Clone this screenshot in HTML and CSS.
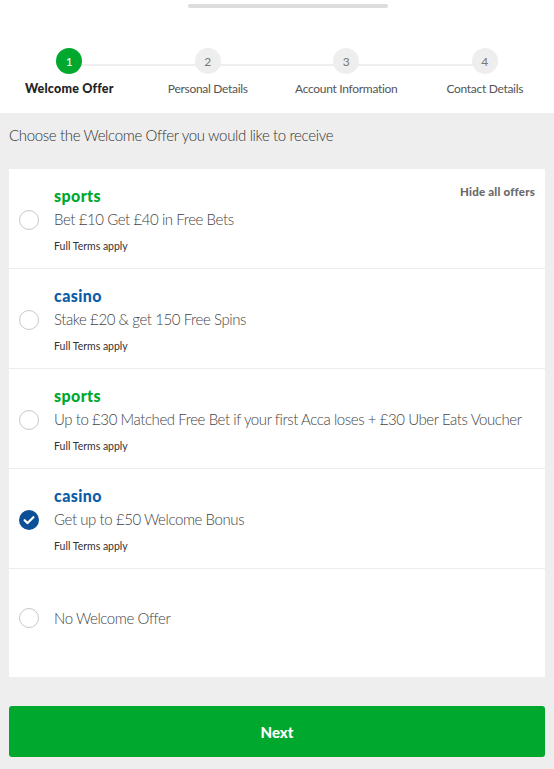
FILE: index.html
```html
<!DOCTYPE html>
<html lang="en">
<head>
<meta charset="utf-8">
<link rel="stylesheet" href="styles.css">
</head>
<body>
<div class="sheet">
  <div class="handle-wrap"><div class="handle"></div></div>
  <ol class="stepper">
    <li class="step active"><span class="dot">1</span><span class="label">Welcome Offer</span></li>
    <li class="step"><span class="dot">2</span><span class="label">Personal Details</span></li>
    <li class="step"><span class="dot">3</span><span class="label">Account Information</span></li>
    <li class="step"><span class="dot">4</span><span class="label">Contact Details</span></li>
  </ol>
  <main class="content">
    <p class="intro">Choose the Welcome Offer you would like to receive</p>
    <div class="offers">
      <label class="offer">
        <span class="radio"></span>
        <span class="body">
          <span class="cat sports">sports</span>
          <span class="title">Bet £10 Get £40 in Free Bets</span>
          <span class="terms">Full Terms apply</span>
        </span>
        <span class="hide">Hide all offers</span>
      </label>
      <label class="offer">
        <span class="radio"></span>
        <span class="body">
          <span class="cat casino">casino</span>
          <span class="title">Stake £20 &amp; get 150 Free Spins</span>
          <span class="terms">Full Terms apply</span>
        </span>
      </label>
      <label class="offer">
        <span class="radio"></span>
        <span class="body">
          <span class="cat sports">sports</span>
          <span class="title">Up to £30 Matched Free Bet if your first Acca loses + £30 Uber Eats Voucher</span>
          <span class="terms">Full Terms apply</span>
        </span>
      </label>
      <label class="offer">
        <span class="radio checked"><svg viewBox="0 0 20 20" width="20" height="20"><circle cx="10" cy="10" r="10" fill="#0b4f97"/><path d="M5.6 10.2 L8.6 13.1 L14.4 7.2" fill="none" stroke="#fff" stroke-width="2.2" stroke-linecap="round" stroke-linejoin="round"/></svg></span>
        <span class="body">
          <span class="cat casino">casino</span>
          <span class="title">Get up to £50 Welcome Bonus</span>
          <span class="terms">Full Terms apply</span>
        </span>
      </label>
      <label class="offer none">
        <span class="radio"></span>
        <span class="body">
          <span class="title">No Welcome Offer</span>
        </span>
      </label>
    </div>
    <button class="next" type="button">Next</button>
  </main>
</div>
</body>
</html>
```
FILE: styles.css
```css
* { box-sizing: border-box; }
html, body { margin: 0; padding: 0; }
body {
  font-family: Lato, "Noto Sans", sans-serif;
  background: #eeeeee;
  color: #444;
  width: 554px;
  height: 769px;
  overflow: hidden;
}
.sheet { display: flex; flex-direction: column; min-height: 769px; }
.handle-wrap { background: #fff; display: flex; justify-content: center; padding: 4px 0 0 22px; }
.handle { width: 200px; height: 4px; border-radius: 2px; background: #dcdcdc; }
.stepper {
  list-style: none;
  margin: 0;
  padding: 40px 0 17px;
  background: #fff;
  display: grid;
  grid-template-columns: repeat(4, 1fr);
  position: relative;
}
.stepper::before {
  content: "";
  position: absolute;
  left: 69px;
  right: 69px;
  top: 56px;
  height: 2px;
  background: #eeeeee;
}
.step { display: flex; flex-direction: column; align-items: center; position: relative; }
.dot {
  width: 26px; height: 26px; border-radius: 50%;
  background: #eeeeee; color: #777;
  display: flex; align-items: center; justify-content: center;
  font-size: 12px;
}
.label { margin-top: 8px; font-size: 12px; color: #555; white-space: nowrap; line-height: 14px; letter-spacing: -0.3px; }
.step.active .dot { background: #00a82d; color: #fff; }
.step.active .label { font-weight: 900; color: #222; font-size: 12.5px; letter-spacing: 0.2px; }
.content { padding: 0 9px 12px; display: flex; flex-direction: column; }
.intro { margin: 0; padding: 13px 0 25px; font-size: 15px; font-weight: 300; color: #333; line-height: 18px; letter-spacing: -0.35px; }
.offers { background: #fff; display: flex; flex-direction: column; }
.offer {
  position: relative;
  display: flex;
  align-items: center;
  height: 100px;
  padding: 2px 10px 0;
  border-bottom: 1px solid #ececec;
}
.offer.none { height: 108px; border-bottom: 0; padding: 0 10px 10px; }
.radio {
  width: 20px; height: 20px; flex: none;
  border: 1px solid #c8c8c8; border-radius: 50%;
  margin-right: 15px;
}
.radio.checked { border: 0; }
.radio svg { display: block; }
.body { display: flex; flex-direction: column; }
.cat { font-size: 16px; font-weight: 900; line-height: 18px; margin-bottom: 5px; letter-spacing: 0.4px; }
.cat.sports { color: #00a82d; }
.cat.casino { color: #0b5ca8; }
.title { font-size: 15px; font-weight: 300; color: #444; line-height: 18px; letter-spacing: -0.42px; }
.terms { font-size: 10.5px; color: #333; margin-top: 12px; line-height: 12px; }
.hide {
  position: absolute; right: 10px; top: 16px;
  font-size: 11.5px; font-weight: 900; color: #6a6a6a; letter-spacing: 0.2px;
}
.next {
  margin-top: 29px;
  height: 51px;
  border: 0; border-radius: 3px;
  background: #00a82d;
  color: #fff;
  font-family: Lato, sans-serif;
  font-size: 15px; font-weight: 900;
}
```
